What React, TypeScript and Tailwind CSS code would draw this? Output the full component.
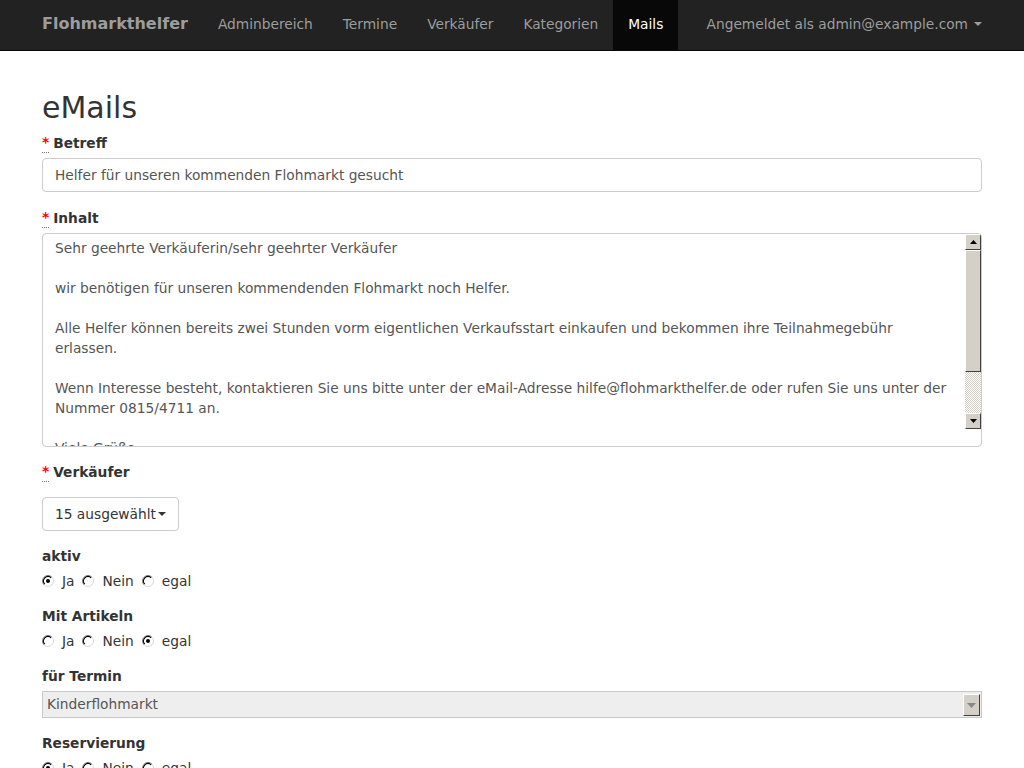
import React from "react";

const font = { fontFamily: '"DejaVu Sans", Verdana, sans-serif' };

function Radio({ checked }: { checked?: boolean }) {
  return (
    <svg width="12" height="12" viewBox="0 0 12 12" className="shrink-0">
      <circle cx="6" cy="6" r="5.5" fill="#fff" />
      <path d="M2.1 9.9 A5.5 5.5 0 0 1 9.9 2.1" fill="none" stroke="#808080" strokeWidth="1" />
      <path d="M2.8 9.2 A4.5 4.5 0 0 1 9.2 2.8" fill="none" stroke="#000" strokeWidth="1.2" />
      <path d="M9.9 2.1 A5.5 5.5 0 0 1 2.1 9.9" fill="none" stroke="#d8d8d8" strokeWidth="1" />
      {checked && <circle cx="6" cy="6" r="2" fill="#000" />}
    </svg>
  );
}

function RadioGroup({ value }: { value: string }) {
  return (
    <div className="flex items-center h-5 mt-[5px] text-[#333]">
      {["Ja", "Nein", "egal"].map((o) => (
        <label key={o} className="flex items-center mr-2">
          <Radio checked={o === value} />
          <span className="ml-2">{o}</span>
        </label>
      ))}
    </div>
  );
}

function Req() {
  return (
    <abbr className="text-[#ff0000] no-underline border-b border-dotted border-[#777] mr-1" title="required">
      *
    </abbr>
  );
}

function Label({ children, req }: { children: React.ReactNode; req?: boolean }) {
  return (
    <div className="font-bold text-[#333] leading-5 flex items-center">
      {req && <Req />}
      <span>{children}</span>
    </div>
  );
}

function SbButton({ down }: { down?: boolean }) {
  return (
    <div className="h-4 w-4 bg-[#d4d0c8] border-t border-l border-t-white border-l-white border-r border-b border-r-[#404040] border-b-[#404040] flex items-center justify-center">
      <svg width="7" height="4" viewBox="0 0 7 4">
        {down ? <path d="M0 0h7L3.5 4z" fill="#000" /> : <path d="M0 4h7L3.5 0z" fill="#000" />}
      </svg>
    </div>
  );
}

const body = [
  "Sehr geehrte Verkäuferin/sehr geehrter Verkäufer",
  "",
  "wir benötigen für unseren kommendenden Flohmarkt noch Helfer.",
  "",
  "Alle Helfer können bereits zwei Stunden vorm eigentlichen Verkaufsstart einkaufen und bekommen ihre Teilnahmegebühr",
  "erlassen.",
  "",
  "Wenn Interesse besteht, kontaktieren Sie uns bitte unter der eMail-Adresse hilfe@flohmarkthelfer.de oder rufen Sie uns unter der",
  "Nummer 0815/4711 an.",
  "",
  "Viele Grüße",
];

export default function App() {
  const nav = ["Adminbereich", "Termine", "Verkäufer", "Kategorien"];
  return (
    <div className="bg-white text-[13.75px] overflow-hidden h-[768px]" style={font}>
      {/* Navbar */}
      <div className="h-[51px] bg-[#222] border-b border-[#080808] whitespace-nowrap">
        <div className="w-[940px] mx-auto flex items-start h-[50px]">
          <div className="text-[16px] font-bold text-[#9d9d9d] leading-[48px] pr-[15px]">Flohmarkthelfer</div>
          {nav.map((n) => (
            <div key={n} className="px-[15px] leading-[48px] text-[#9d9d9d]">
              {n}
            </div>
          ))}
          <div className="px-[15px] leading-[48px] h-[50px] text-white bg-[#080808]">Mails</div>
          <div className="ml-auto px-[15px] mr-[-15px] h-[48px] leading-[48px] text-[#9d9d9d] flex items-center">
            Angemeldet als admin@example.com
            <span className="ml-[6px] w-0 h-0 border-l-4 border-r-4 border-t-4 border-l-transparent border-r-transparent border-t-[#9d9d9d]" />
          </div>
        </div>
      </div>

      <div className="w-[940px] mx-auto">
        <h2 className="text-[30px] leading-[33px] mt-10 mb-2 text-[#333]">eMails</h2>

        <Label req>Betreff</Label>
        <div className="mt-[5px] h-[34px] border border-[#ccc] rounded-[4px] px-3 flex items-center text-[#555]">
          Helfer für unseren kommenden Flohmarkt gesucht
        </div>

        <div className="mt-[15px]">
          <Label req>Inhalt</Label>
        </div>
        <div className="relative mt-[5px] h-[214px] border border-[#ccc] rounded-[4px] overflow-hidden text-[#555]">
          <div className="pl-3 pr-8 pt-1 leading-5">
            {body.map((l, i) => (
              <div key={i} className="h-5 whitespace-nowrap">
                {l}
              </div>
            ))}
          </div>
          <div className="absolute right-0 top-0 w-4 flex flex-col">
            <SbButton />
            <div className="h-[122px] bg-[#d4d0c8] border-t border-l border-t-white border-l-white border-r border-b border-r-[#404040] border-b-[#404040]" />
            <div className="h-[41px] bg-[repeating-conic-gradient(#d4d0c8_0_25%,#ffffff_0_50%)] bg-[length:2px_2px]" />
            <SbButton down />
          </div>
        </div>

        <div className="mt-[14px]">
          <Label req>Verkäufer</Label>
        </div>
        <div className="mt-[15px] flex">
          <div className="inline-flex items-center h-[34px] border border-[#ccc] rounded-[4px] px-3 text-[#333] bg-white">
            15 ausgewählt
            <span className="ml-[2px] w-0 h-0 border-l-4 border-r-4 border-t-4 border-l-transparent border-r-transparent border-t-[#333]" />
          </div>
        </div>

        <div className="mt-[15px]">
          <Label>aktiv</Label>
          <RadioGroup value="Ja" />
        </div>

        <div className="mt-[15px]">
          <Label>Mit Artikeln</Label>
          <RadioGroup value="egal" />
        </div>

        <div className="mt-[15px]">
          <Label>für Termin</Label>
          <div className="mt-[5px] h-[27px] bg-[#eee] border border-[#c8c8c8] flex items-center pl-1 text-[#555] relative">
            Kinderflohmarkt
            <div className="absolute right-[1px] top-[2px] w-[17px] h-[22px] bg-[#d4d0c8] border-t border-l border-t-white border-l-white border-r border-b border-r-[#404040] border-b-[#404040] flex items-center justify-center">
              <svg width="9" height="5" viewBox="0 0 9 5">
                <path d="M0 0h9L4.5 5z" fill="#888" />
              </svg>
            </div>
          </div>
        </div>

        <div className="mt-[15px]">
          <Label>Reservierung</Label>
          <RadioGroup value="Ja" />
        </div>
      </div>
    </div>
  );
}
